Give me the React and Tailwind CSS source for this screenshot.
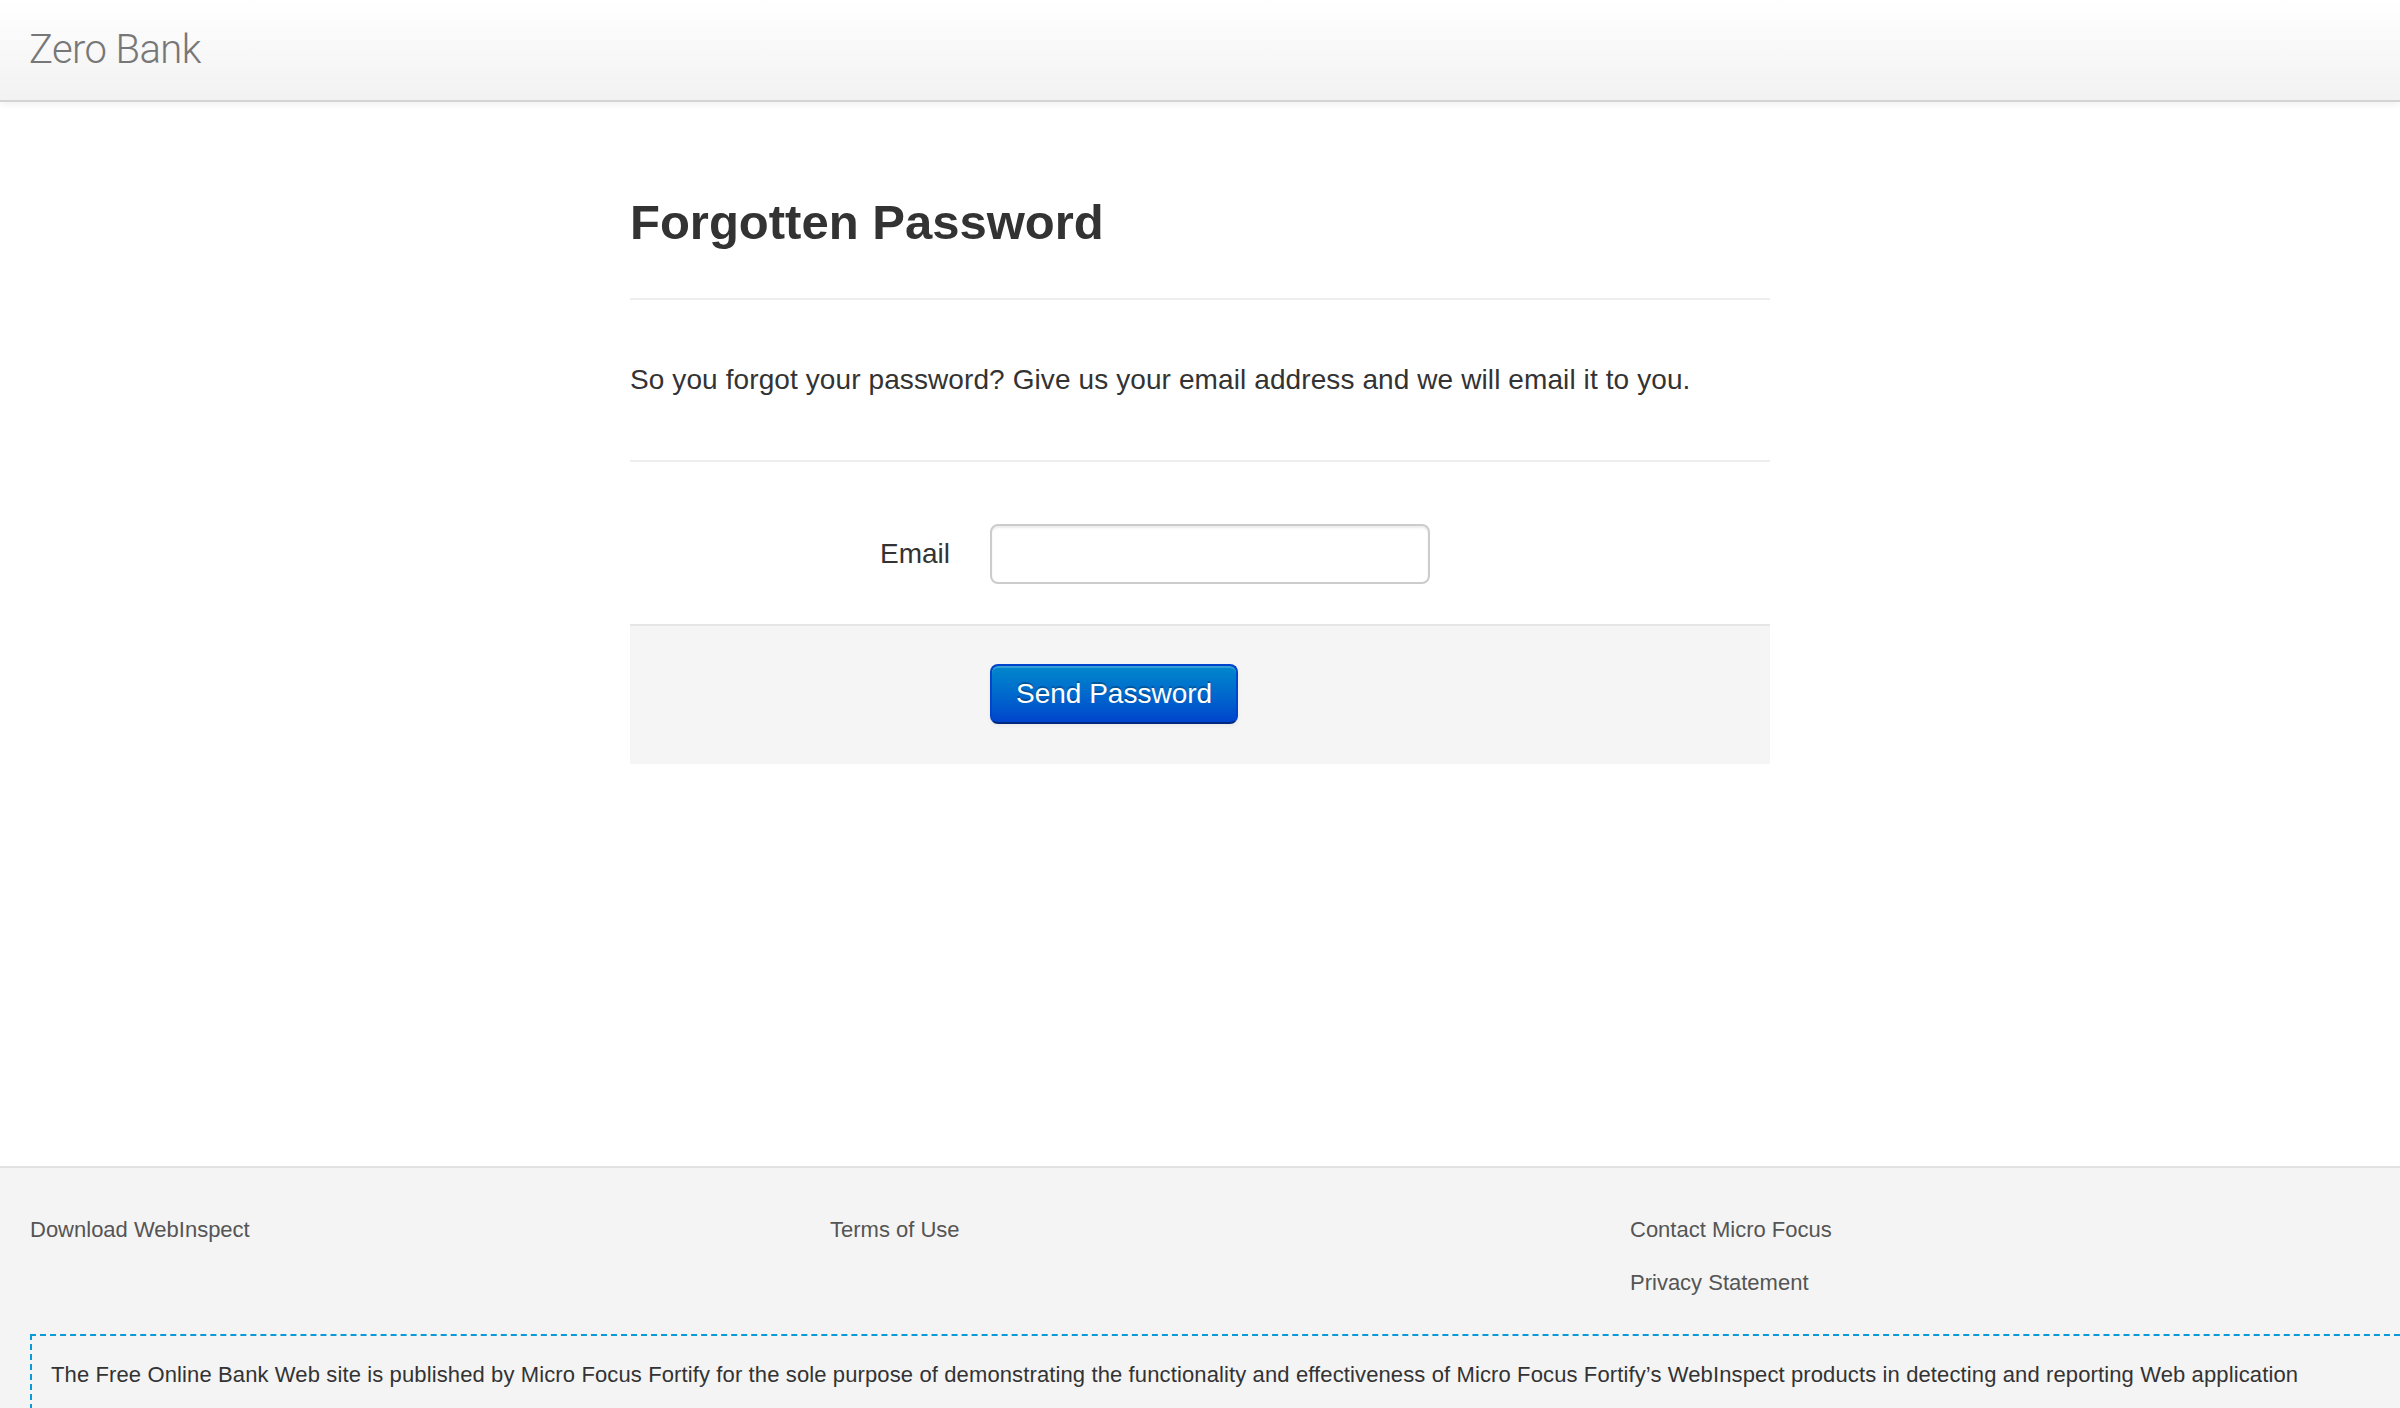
import React from 'react'

const disclaimer =
    "The Free Online Bank Web site is published by Micro Focus Fortify for the sole purpose of demonstrating the functionality and effectiveness of Micro Focus Fortify’s WebInspect products in detecting and reporting Web application vulnerabilities. This site is not a real banking site and any similarities to third party products and/or Web sites are purely coincidental. This site is provided \"as is\" without warranty of any kind, either express or implied. Micro Focus does not assume any risk in relation to your use of this Web site. Use of this Web site indicates that you have read and agree to Micro Focus’s Terms of Use found at https://www.microfocus.com/about/legal/#privacy";

const App = () => {
    return (
        <div className="min-h-screen bg-white font-['Liberation_Sans',Arial,sans-serif] text-[#333] overflow-hidden">
            {/* navbar */}
            <header className="relative z-10 h-[102px] border-b-2 border-[#d4d4d4] bg-gradient-to-b from-white to-[#f2f2f2] shadow-[0_2px_8px_rgba(0,0,0,0.065)]">
                <div className="pl-[29px] pt-[30px] font-['Roboto',sans-serif] font-light text-[40px] leading-[40px] text-[#777] tracking-[-0.6px]">
                    Zero Bank
                </div>
            </header>

            {/* page body */}
            <main className="h-[1064px] pt-[93px]">
                <div className="mx-auto w-[1140px]">
                    <div className="pb-[49px] border-b-2 border-[#eee]">
                        <h1 className="text-[49px] leading-[54px] font-bold text-[#333]">Forgotten Password</h1>
                    </div>

                    <p className="my-[60px] text-[28px] leading-[40px] tracking-[0.1px]">
                        So you forgot your password? Give us your email address and we will email it to you.
                    </p>

                    <form className="border-t-2 border-[#eee]" onSubmit={(e) => e.preventDefault()}>
                        <div className="flex pt-[62px] pb-[40px]">
                            <label htmlFor="user_email" className="w-[320px] pt-[10px] text-right text-[28px] leading-[40px]">
                                Email
                            </label>
                            <input
                                id="user_email"
                                type="text"
                                className="ml-[40px] h-[60px] w-[440px] rounded-[8px] border-2 border-[#ccc] bg-white px-[12px] text-[28px] shadow-[inset_0_2px_2px_rgba(0,0,0,0.075)] outline-none"
                            />
                        </div>
                        <div className="border-t-2 border-[#e5e5e5] bg-[#f5f5f5] pt-[38px] pb-[40px] pl-[360px]">
                            <button
                                type="submit"
                                className="h-[60px] rounded-[8px] border-2 border-[#0044cc] border-b-[#002a80] bg-gradient-to-b from-[#0088cc] to-[#0044cc] px-[24px] text-[28px] leading-[40px] text-white [text-shadow:0_-2px_0_rgba(0,0,0,0.25)] shadow-[inset_0_2px_0_rgba(255,255,255,0.2),0_2px_4px_rgba(0,0,0,0.05)]"
                            >
                                Send Password
                            </button>
                        </div>
                    </form>
                </div>
            </main>

            {/* footer */}
            <footer className="border-t-2 border-[#e2e2e2] bg-[#f4f4f4] pt-[35px] pb-[40px] text-[22px]">
                <div className="grid grid-cols-3">
                    <div className="pl-[30px] leading-[53px] text-[#555]">
                        <a href="#">Download WebInspect</a>
                    </div>
                    <div className="pl-[30px] leading-[53px] text-[#555]">
                        <a href="#">Terms of Use</a>
                    </div>
                    <div className="flex flex-col pl-[30px] leading-[53px] text-[#555]">
                        <a href="#">Contact Micro Focus</a>
                        <a href="#">Privacy Statement</a>
                    </div>
                </div>
                <div className="mt-[25px] ml-[30px] mr-[-20px] border-2 border-dashed border-[#0a9ad9] pt-[18px] pb-[24px] pl-[19px] pr-[60px] leading-[42px] tracking-[0.12px] text-[#333]">
                    <p>{disclaimer}</p>
                    <p className="mt-[22px]">Copyright © 2012-2018, Micro Focus Development Company. All rights reserved.</p>
                </div>
            </footer>
        </div>
    )
}

export default App
